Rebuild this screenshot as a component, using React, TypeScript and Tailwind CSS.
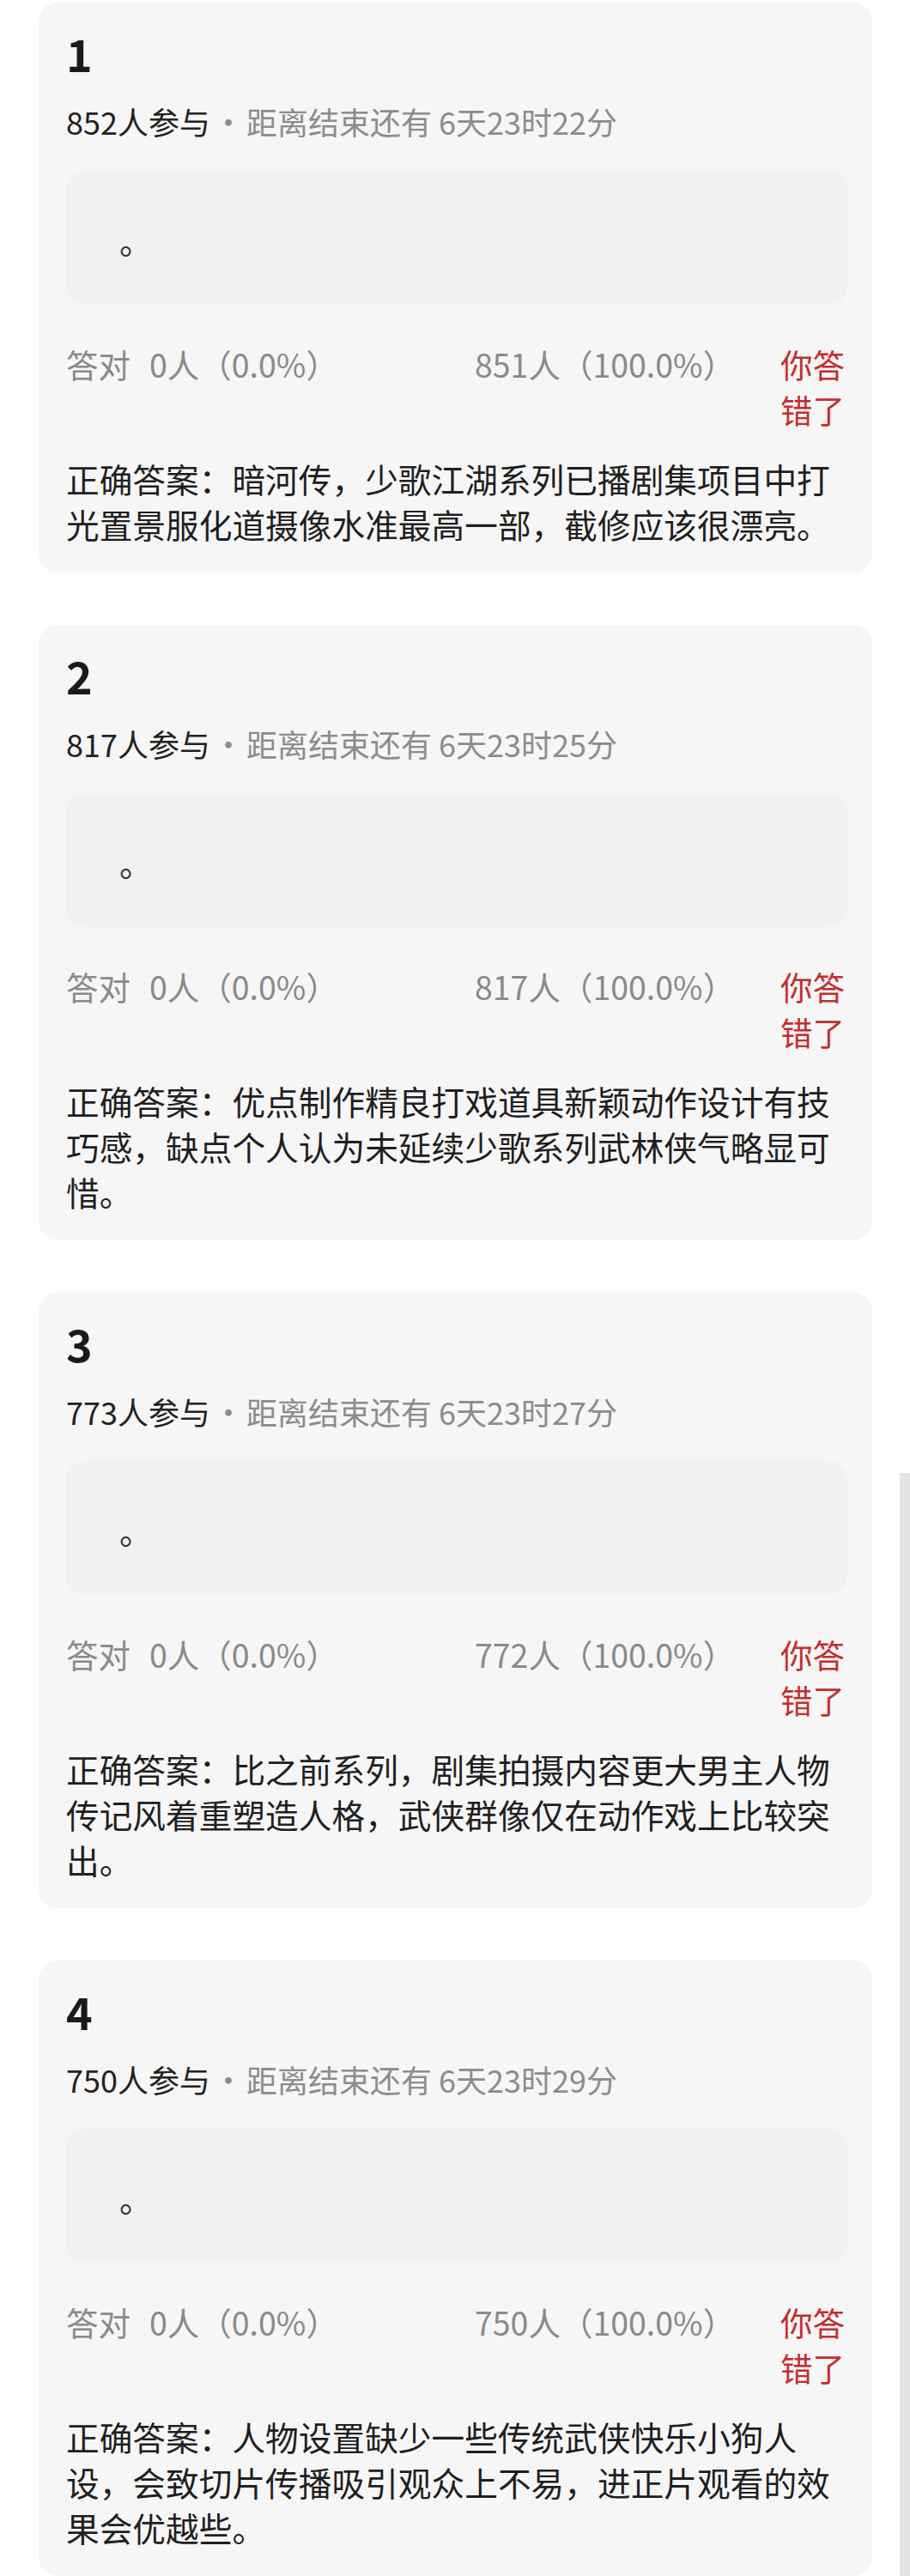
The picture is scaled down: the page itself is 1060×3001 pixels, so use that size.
import React from "react";

type Question = {
  no: number;
  joined: number;
  remain: string;
  wrong: number;
  answer: string;
};

const questions: Question[] = [
  {
    no: 1,
    joined: 852,
    remain: "6天23时22分",
    wrong: 851,
    answer: "正确答案：暗河传，少歌江湖系列已播剧集项目中打光置景服化道摄像水准最高一部，截修应该很漂亮。",
  },
  {
    no: 2,
    joined: 817,
    remain: "6天23时25分",
    wrong: 817,
    answer: "正确答案：优点制作精良打戏道具新颖动作设计有技巧感，缺点个人认为未延续少歌系列武林侠气略显可惜。",
  },
  {
    no: 3,
    joined: 773,
    remain: "6天23时27分",
    wrong: 772,
    answer: "正确答案：比之前系列，剧集拍摄内容更大男主人物传记风着重塑造人格，武侠群像仅在动作戏上比较突出。",
  },
  {
    no: 4,
    joined: 750,
    remain: "6天23时29分",
    wrong: 750,
    answer: "正确答案：人物设置缺少一些传统武侠快乐小狗人设，会致切片传播吸引观众上不易，进正片观看的效果会优越些。",
  },
];

function QuizCard({ q }: { q: Question }) {
  return (
    <div className="w-[971px] ml-[45px] rounded-[22px] bg-[#f6f6f6] pl-[32px] pr-[29px] pt-[33px] pb-[30px]">
      <div className="text-[52px] leading-[52px] font-bold text-[#1a1a1a]">{q.no}</div>

      <div className="mt-[28px] flex h-[50px] items-center text-[36px] leading-[50px] whitespace-nowrap">
        <span className="text-[#222222]">{q.joined}人参与</span>
        <span className="w-[42px] text-center text-[#8c8c8c]">·</span>
        <span className="text-[#8c8c8c]">距离结束还有 {q.remain}</span>
      </div>

      <div className="mt-[33px] h-[156px] rounded-[22px] bg-[#f1f1f1] flex items-center pl-[62px]">
        <span className="mt-[5px] text-[38.7px] leading-[53px] text-[#333333]">。</span>
      </div>

      <div className="mt-[42px] grid grid-cols-[476px_1fr_78px] text-[37.5px] leading-[53px]">
        <div className="text-[#8a8a8a] whitespace-nowrap">
          答对<span className="ml-[22px]">0人（0.0%）</span>
        </div>
        <div className="text-[#8a8a8a] whitespace-nowrap">{q.wrong}人（100.0%）</div>
        <div className="text-[#c62d2d]">你答错了</div>
      </div>

      <p className="mt-[28px] text-[38.7px] leading-[53px] text-[#1f1f1f]">{q.answer}</p>
    </div>
  );
}

export default function App() {
  return (
    <div
      className="relative min-h-[3001px] bg-white pt-[3px]"
      style={{ fontFamily: '"Noto Sans CJK SC", "Noto Sans", sans-serif' }}
    >
      <div className="flex flex-col gap-[61px]">
        {questions.map((q) => (
          <QuizCard key={q.no} q={q} />
        ))}
      </div>
      {/* scroll indicator on the right edge */}
      <div className="absolute right-0 top-[1716px] bottom-0 w-[12px] bg-[#e4e4e4]" />
    </div>
  );
}
